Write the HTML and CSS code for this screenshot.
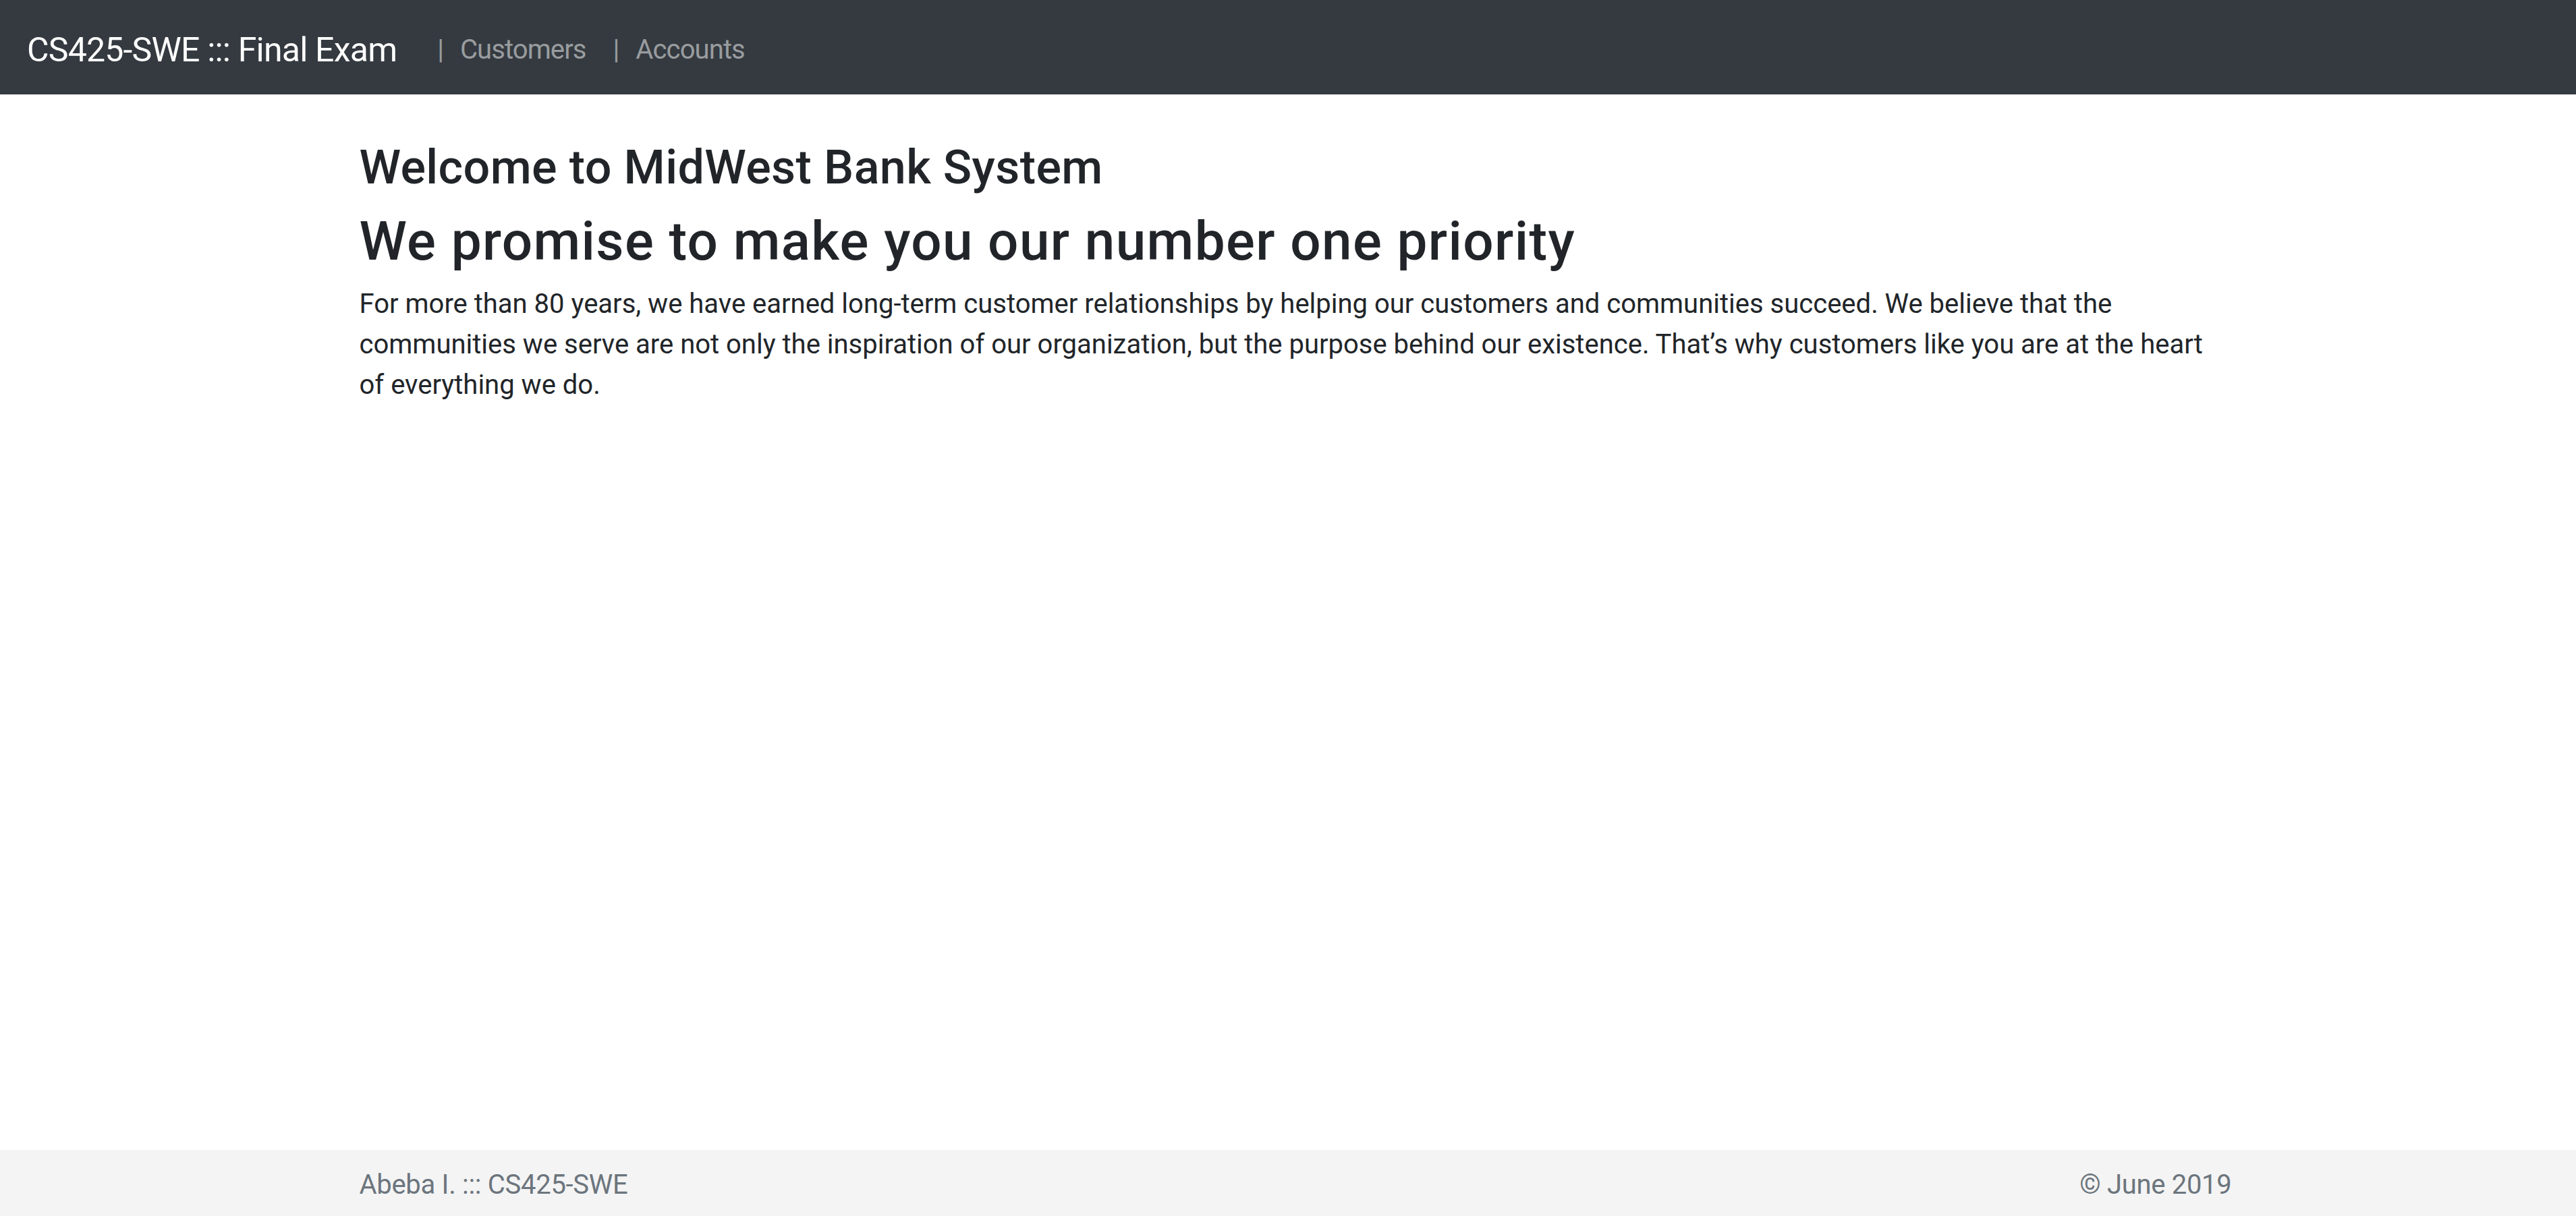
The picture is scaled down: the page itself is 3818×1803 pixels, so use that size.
FILE: index.html
```html
<!DOCTYPE html>
<html lang="en">
<head>
<meta charset="utf-8">
<title>CS425-SWE ::: Final Exam</title>
<link rel="stylesheet" href="styles.css">
</head>
<body>
<nav class="navbar">
  <a class="brand" href="#">CS425-SWE ::: Final Exam</a>
  <ul class="nav">
    <li><a class="nav-link" href="#"><span class="sep">|</span>Customers</a></li>
    <li><a class="nav-link" href="#"><span class="sep">|</span>Accounts</a></li>
  </ul>
</nav>
<main class="main">
  <div class="container">
    <h3 class="welcome">Welcome to MidWest Bank System</h3>
    <h2 class="promise">We promise to make you our number one priority</h2>
    <p class="intro">For more than 80 years, we have earned long-term customer relationships by helping our customers and communities succeed. We believe that the communities we serve are not only the inspiration of our organization, but the purpose behind our existence. That’s why customers like you are at the heart of everything we do.</p>
  </div>
</main>
<footer class="footer">
  <div class="container footer-row">
    <span class="footer-text">Abeba I. ::: CS425-SWE</span>
    <span class="footer-text">© June 2019</span>
  </div>
</footer>
</body>
</html>
```
FILE: styles.css
```css
html, body {
  margin: 0;
  padding: 0;
}
body {
  min-height: 100vh;
  display: flex;
  flex-direction: column;
  font-family: Roboto, "Liberation Sans", sans-serif;
  font-size: 40px;
  line-height: 1.5;
  color: #212529;
  background: #ffffff;
}
a {
  text-decoration: none;
}
.navbar {
  display: flex;
  align-items: center;
  background: #343a40;
  padding: 20px 40px;
  height: 140px;
  box-sizing: border-box;
}
.brand {
  color: #ffffff;
  font-size: 50px;
  line-height: 75px;
  letter-spacing: -0.8px;
  padding: 17px 0 8px;
  margin-right: 40px;
}
.nav {
  display: flex;
  list-style: none;
  margin: 0;
  padding: 0;
}
.nav-link {
  display: block;
  color: rgba(255, 255, 255, 0.5);
  padding: 24px 20px 16px;
  line-height: 60px;
  letter-spacing: -0.9px;
}
.sep {
  margin-right: 24px;
  letter-spacing: 0;
}
.main {
  flex: 1;
}
.container {
  box-sizing: border-box;
  width: 2850px;
  padding: 0 37.5px;
  margin-left: calc(50% - 1414px);
}
.welcome {
  margin: 66px 0 20px;
  font-size: 70px;
  font-weight: 500;
  line-height: 1.2;
  letter-spacing: 0.4px;
}
.promise {
  margin: 0 0 15px;
  font-size: 80px;
  font-weight: 500;
  line-height: 1.2;
  letter-spacing: 1.4px;
}
.intro {
  margin: 0 0 40px;
}
.footer {
  background: #f4f4f4;
  padding: 22px 0 16px;
}
.footer-row {
  display: flex;
  justify-content: space-between;
}
.footer-text {
  color: #6c757d;
  line-height: 60px;
  letter-spacing: -0.3px;
}
```
